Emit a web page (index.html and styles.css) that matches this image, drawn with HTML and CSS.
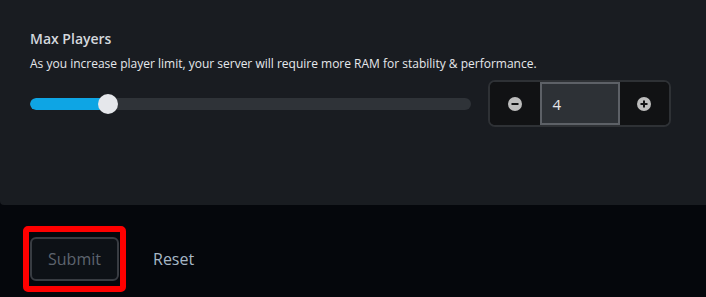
FILE: index.html
```html
<!DOCTYPE html>
<html>
<head>
<meta charset="utf-8">
<link rel="stylesheet" href="styles.css">
</head>
<body>
<div class="card">
  <div class="title">Max Players</div>
  <div class="desc">As you increase player limit, your server will require more RAM for stability &amp; performance.</div>
  <div class="row">
    <div class="slider">
      <div class="track"><div class="fill" style="width:78px"></div></div>
      <div class="thumb" style="left:68px"></div>
    </div>
    <div class="stepper">
      <button class="step">
        <svg width="14" height="14" viewBox="0 0 14 14"><circle cx="7" cy="7" r="7" fill="#bdbdbd"/><rect x="3.5" y="6" width="7" height="2" fill="#111214"/></svg>
      </button>
      <div class="value">4</div>
      <button class="step">
        <svg width="14" height="14" viewBox="0 0 14 14"><circle cx="7" cy="7" r="7" fill="#bdbdbd"/><rect x="3.5" y="6" width="7" height="2" fill="#111214"/><rect x="6" y="3.5" width="2" height="7" fill="#111214"/></svg>
      </button>
    </div>
  </div>
</div>
<div class="actions">
  <div class="highlight"><button class="submit">Submit</button></div>
  <button class="reset">Reset</button>
</div>
</body>
</html>
```
FILE: styles.css
```css
html, body {
  margin: 0;
  padding: 0;
  background: #05070c;
  font-family: "Open Sans", "Noto Sans", sans-serif;
}
.card {
  background: #191c21;
  height: 205px;
  box-sizing: border-box;
  padding: 29px 35px 0 30px;
  border-radius: 0 0 0 4px;
}
.title {
  color: #d3d7dd;
  font-size: 14px;
  font-weight: 600;
  line-height: 20px;
}
.desc {
  color: #e6e8ec;
  font-size: 12px;
  line-height: 16px;
  margin-top: 7px;
}
.row {
  display: flex;
  align-items: center;
  gap: 17px;
  margin-top: 8px;
}
.slider {
  position: relative;
  flex: 1;
  height: 20px;
  display: flex;
  align-items: center;
}
.track {
  width: 100%;
  height: 12px;
  border-radius: 6px;
  background: #2f3338;
  overflow: hidden;
}
.fill {
  height: 100%;
  background: #0ea5e4;
  border-radius: 6px 0 0 6px;
}
.thumb {
  position: absolute;
  top: 0;
  width: 20px;
  height: 20px;
  border-radius: 50%;
  background: #e5e7eb;
}
.stepper {
  display: flex;
  flex: none;
  width: 183px;
  height: 47px;
  box-sizing: border-box;
  border: 2px solid #2e3135;
  border-radius: 7px;
  overflow: hidden;
  background: #111214;
}
.step {
  flex: 1;
  border: 0;
  padding: 0;
  background: #111214;
  display: flex;
  align-items: center;
  justify-content: center;
}
.step svg { display: block; }
.value {
  width: 80px;
  flex: none;
  box-sizing: border-box;
  border: 2px solid #5d6167;
  background: #2d3136;
  color: #e4e6ea;
  font-size: 15px;
  display: flex;
  align-items: center;
  padding-left: 11px;
}
.actions {
  display: flex;
  align-items: center;
  padding: 21px 0 0 23px;
}
.highlight {
  border: 6px solid #ff0000;
  border-radius: 5px;
  padding: 5px 1px;
}
.submit {
  width: 89px;
  height: 44px;
  box-sizing: border-box;
  border: 2px solid #383c42;
  border-radius: 6px;
  background: #0d1116;
  color: #5d646e;
  font-family: "Open Sans", "Noto Sans", sans-serif;
  font-size: 16px;
}
.reset {
  margin-left: 27px;
  border: 0;
  background: none;
  padding: 0;
  color: #a7b7c7;
  font-family: "Open Sans", "Noto Sans", sans-serif;
  font-size: 16px;
}
```
